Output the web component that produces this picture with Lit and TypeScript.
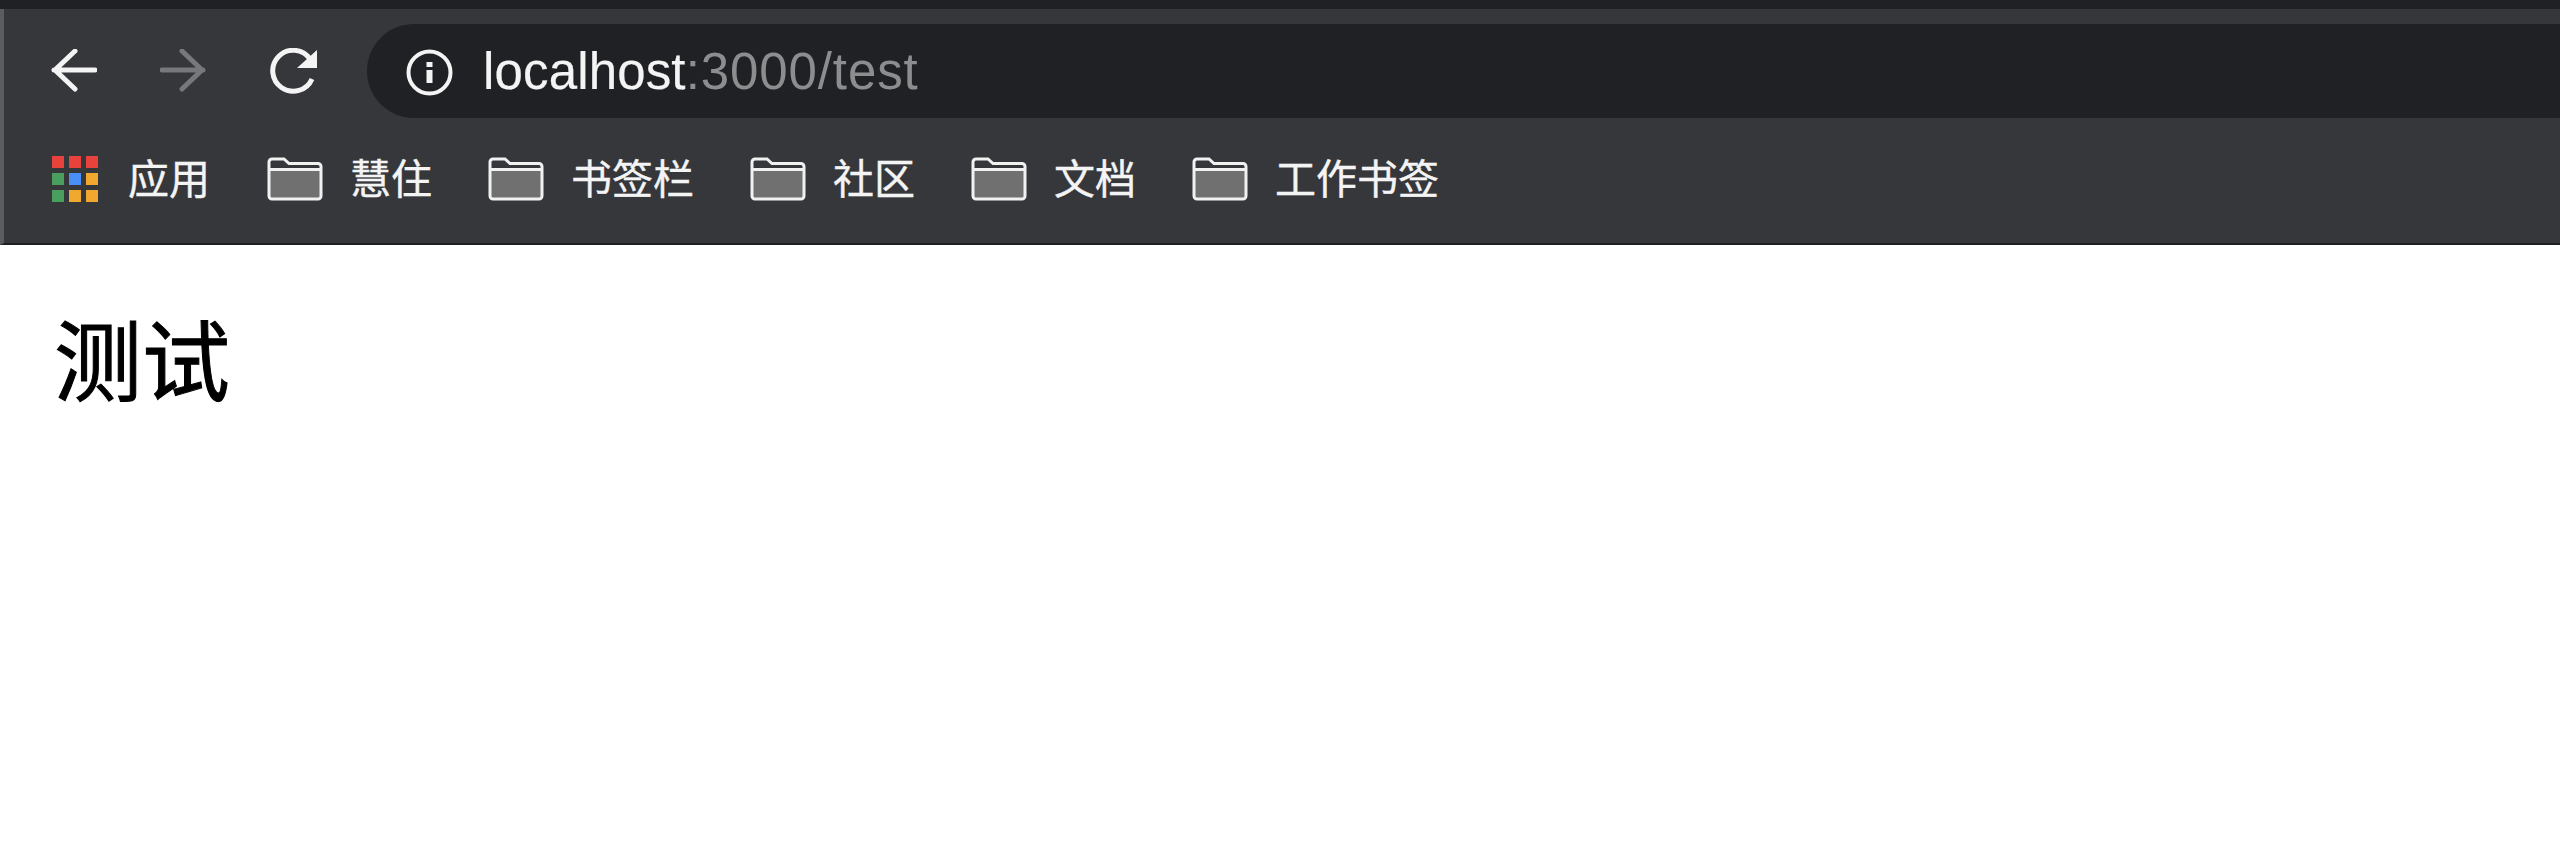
import { LitElement, html, css } from "lit";
import { customElement } from "lit/decorators.js";

const folder = html`<svg class="folder" viewBox="0 0 56 44" width="56" height="44">
  <path d="M3 13h50v28H3z" fill="#707071"/>
  <path d="M2 5a3 3 0 0 1 3-3h12l5 4.500h29a3 3 0 0 1 3 3V39a3 3 0 0 1-3 3H5a3 3 0 0 1-3-3zM2 12.500h52" fill="none" stroke="#f1f1f1" stroke-width="3"/>
</svg>`;

const appsColors = ["#e8423c","#e8423c","#e8423c","#4a9f5f","#4a8ff5","#f0a92e","#4a9f5f","#f0a92e","#f0a92e"];

@customElement("app-root")
export class AppRoot extends LitElement {
  static styles = css`
    :host { display: block; width: 2560px; height: 860px; background: #fff; overflow: hidden;
      font-family: "Liberation Sans", "Noto Sans CJK SC", sans-serif; }
    .chrome { height: 245px; box-sizing: border-box; background: #36373b; border-left: 4px solid #5b5c5f;
      border-bottom: 2px solid #1f2023; display: flex; flex-direction: column; }
    .strip { height: 9px; margin-left: -4px; background: #202124; flex: none; }
    .toolbar { display: flex; align-items: center; height: 94px; margin-top: 15px; flex: none; padding-left: 47px; }
    .nav { flex: none; display: block; }
    .back { margin-right: 63px; }
    .forward { margin-right: 64px; }
    .reload { margin-right: 49px; }
    .omni { flex: 1; height: 94px; background: #202124; border-radius: 47px 0 0 47px; display: flex; align-items: center; padding-left: 39px; }
    .info { flex: none; margin-right: 30px; margin-top: 3px; }
    .url { font-size: 51px; letter-spacing: 0.9px; color: #8c8d8f; white-space: nowrap; line-height: 1; }
    .url b { font-weight: 400; letter-spacing: 0.15px; color: #f4f4f5; -webkit-text-stroke: 0.2px #f4f4f5; }
    .bookmarks { display: flex; align-items: center; height: 120px; padding-left: 48px; margin-top: 1px; }
    .apps { display: grid; grid-template-columns: repeat(3, 12px); grid-auto-rows: 12px; gap: 5px; margin-right: 30px; }
    .apps i { display: block; }
    .label { font-size: 41px; line-height: 1; padding-top: 2px; color: #f4f4f5; white-space: nowrap; -webkit-text-stroke: 0.4px #f4f4f5; }
    .item { display: flex; align-items: center; gap: 27px; margin-right: 56px; }
    .appitem { display: flex; align-items: center; margin-right: 57px; }
    .folder { flex: none; display: block; }
    h1 { margin: 0; padding: 75px 0 0 54px; font-size: 88px; line-height: 1; font-weight: 400; color: #000; -webkit-text-stroke: 1px #000; }
  `;
  render() {
    const names = ["慧住", "书签栏", "社区", "文档", "工作书签"];
    return html`
      <div class="chrome">
        <div class="strip"></div>
        <div class="toolbar">
          <svg class="nav back" width="46" height="44" viewBox="0 0 46 44" fill="none" stroke="#f4f4f5" stroke-width="5" stroke-linecap="round">
            <path d="M3 21h41M24 2 4 21l20 19"/>
          </svg>
          <svg class="nav forward" width="46" height="44" viewBox="0 0 46 44" fill="none" stroke="#77787b" stroke-width="5" stroke-linecap="round">
            <path d="M2 21h41M22 2l20 19-20 19"/>
          </svg>
          <svg class="nav reload" width="48" height="46" viewBox="0 0 48 46">
            <path d="M42 31a20.500 20.500 0 1 1-2-20" fill="none" stroke="#f4f4f5" stroke-width="5"/>
            <path d="M47 2v18H27z" fill="#f4f4f5"/>
          </svg>
          <div class="omni">
            <svg class="info" width="47" height="47" viewBox="0 0 47 47">
              <circle cx="23.500" cy="23.500" r="21" fill="none" stroke="#f4f4f5" stroke-width="4"/>
              <rect x="20.500" y="21" width="6" height="13" fill="#f4f4f5"/>
              <rect x="20.500" y="13" width="6" height="5" fill="#f4f4f5"/>
            </svg>
            <div class="url"><b>localhost</b>:3000/test</div>
          </div>
        </div>
        <div class="bookmarks">
          <div class="appitem">
            <div class="apps">${appsColors.map((c) => html`<i style="background:${c}"></i>`)}</div>
            <span class="label">应用</span>
          </div>
          ${names.map((n) => html`<div class="item">${folder}<span class="label">${n}</span></div>`)}
        </div>
      </div>
      <h1>测试</h1>
    `;
  }
}
